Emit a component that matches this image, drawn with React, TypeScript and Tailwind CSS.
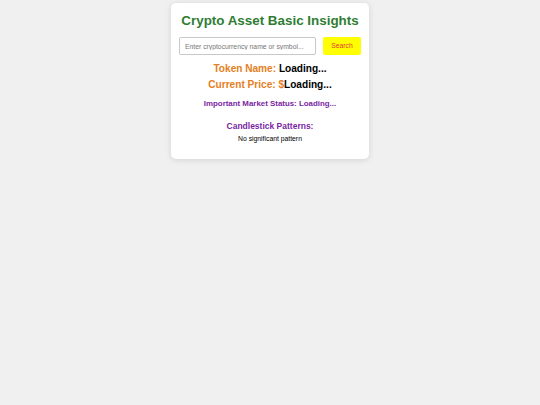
export default function App() {
  return (
    <div
      className="min-h-[405px] bg-[#f0f0f0] pt-[3px]"
      style={{ fontFamily: '"Liberation Sans", Arial, sans-serif' }}
    >
      <div className="mx-auto flex w-[198px] flex-col items-center rounded-[5px] bg-white px-2 pb-[16px] pt-[10px] shadow-[0_1px_6px_rgba(0,0,0,0.12)]">
        <h1 className="text-[13.4px] font-bold leading-[16px] text-[#2e7d32]">
          Crypto Asset Basic Insights
        </h1>

        <div className="mt-[8px] flex w-full items-center justify-between">
          <input
            placeholder="Enter cryptocurrency name or symbol..."
            className="h-[18px] w-[137px] rounded-[2px] border border-[#c8c8c8] px-[5px] text-[6.8px] text-[#333] outline-none placeholder:text-[#777]"
          />
          <button className="h-[18px] w-[38px] rounded-[2px] bg-[#ffff00] text-[6.8px] text-[#e53935]">
            Search
          </button>
        </div>

        <div className="mt-[6px] text-[10.1px] font-bold leading-[16px]">
          <span className="text-[#e67e22]">Token Name: </span>
          <span className="text-black">Loading...</span>
        </div>
        <div className="text-[10.1px] font-bold leading-[16px]">
          <span className="text-[#e67e22]">Current Price: $</span>
          <span className="text-black">Loading...</span>
        </div>

        <div className="mt-[4px] text-[7.9px] font-bold leading-[13px] text-[#7b1fa2]">
          Important Market Status: Loading...
        </div>

        <div className="mt-[10px] text-[8.5px] font-bold leading-[12px] text-[#7b1fa2]">
          Candlestick Patterns:
        </div>
        <div className="mt-[2px] text-[6.8px] leading-[9px] text-black">No significant pattern</div>
      </div>
    </div>
  );
}
